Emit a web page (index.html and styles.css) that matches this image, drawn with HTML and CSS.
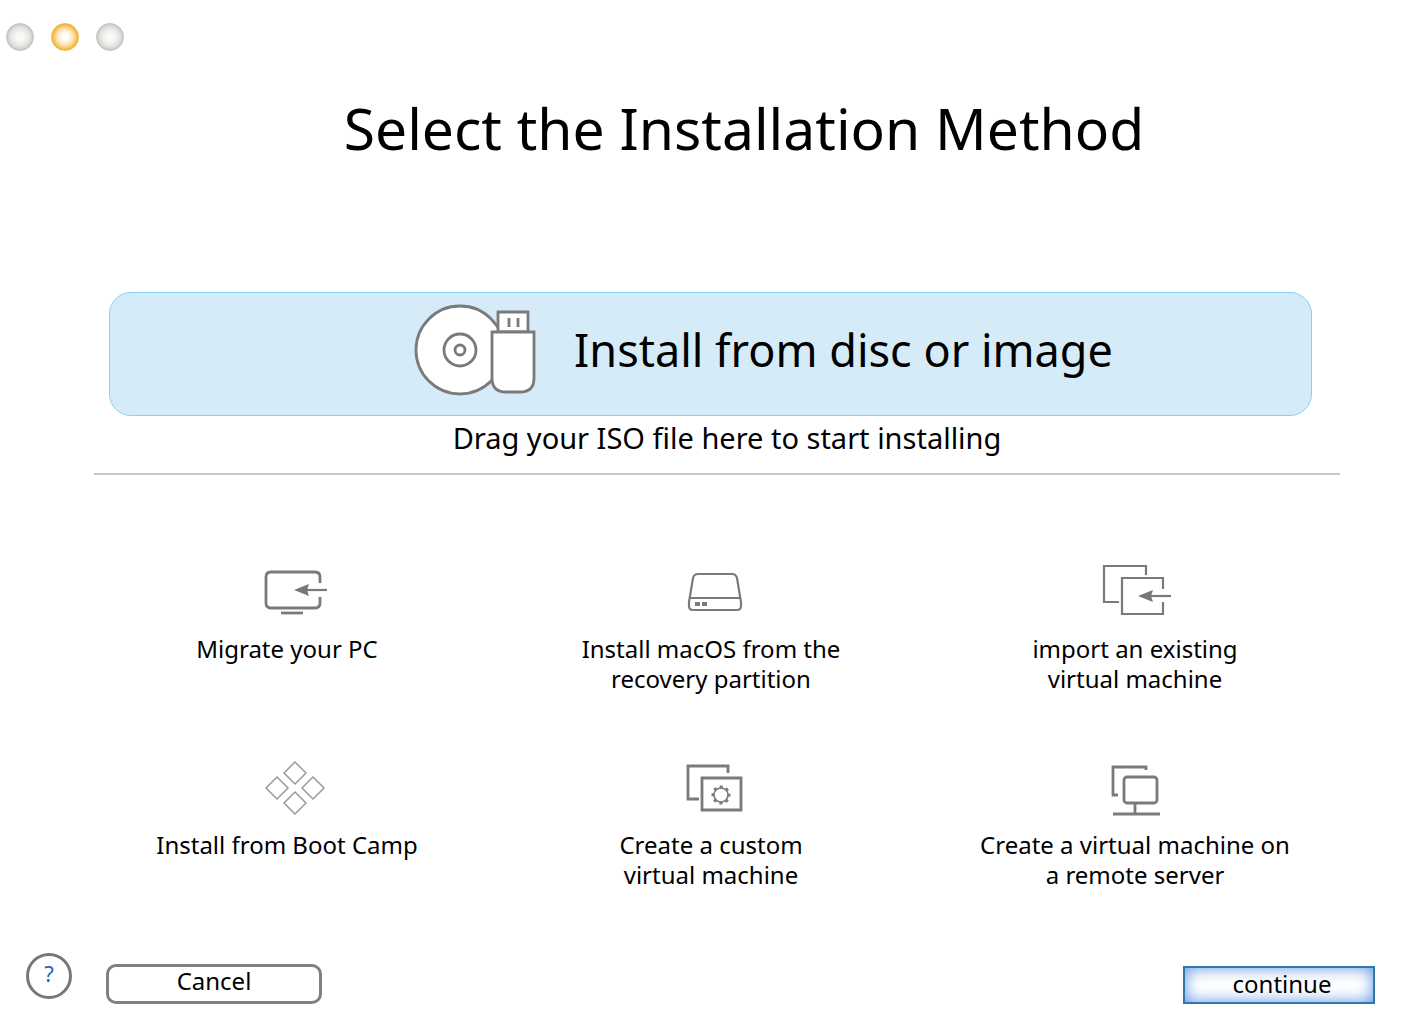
FILE: index.html
```html
<!DOCTYPE html>
<html lang="en">
<head>
    <meta charset="UTF-8">
    <meta name="viewport" content="width=device-width, initial-scale=1.0">
    <title>Select the Installation Method</title>
    <link rel="stylesheet" href="styles.css">
</head>
<body>
    <header class="titlebar">
        <button class="dot" aria-label="Close"></button>
        <button class="dot dot-active" aria-label="Minimize"></button>
        <button class="dot" aria-label="Zoom"></button>
    </header>

    <main>
        <h1>Select the Installation Method</h1>

        <section class="source">
            <button class="drop-area">
                <svg class="disc-icon" viewBox="0 0 124 92">
                    <circle cx="46" cy="46" r="44"/>
                    <circle cx="46" cy="46" r="16"/>
                    <circle cx="46" cy="46" r="5"/>
                    <path d="M84 8h30v20H84z"/>
                    <path d="M95 14v9M104 14v9"/>
                    <path d="M78 28h42v46q0 14-14 14H92q-14 0-14-14z"/>
                </svg>
                <span>Install from disc or image</span>
            </button>
            <p>Drag your ISO file here to start installing</p>
        </section>

        <section class="methods">
            <button class="method">
                <svg viewBox="0 0 80 60">
                    <path d="M70 21v-6q0-5-5-5H21q-5 0-5 5v26q0 5 5 5h44q5 0 5-5v-6"/>
                    <path d="M31 51h22"/>
                    <path class="thin" d="M77 28H54"/>
                    <path class="solid" d="M44 28l15-6-2 6 2 6z"/>
                </svg>
                <span>Migrate your PC</span>
            </button>

            <button class="method">
                <svg viewBox="0 0 80 60">
                    <path class="thin" d="M24 12h34q4 0 5 4l4 24v4q0 4-4 4H19q-4 0-4-4v-4l4-24q1-4 5-4zM16 36h50"/>
                    <path class="bar" d="M21 42h5M28 42h5"/>
                </svg>
                <span>Install macOS from the<br>recovery partition</span>
            </button>

            <button class="method">
                <svg viewBox="0 0 80 60">
                    <path class="thin" d="M48 13V4H6v36h15M65 27V16H24v36h41V40"/>
                    <path class="thin" d="M73 34H52"/>
                    <path class="solid" d="M40 34l15-6-2 6 2 6z"/>
                </svg>
                <span>import an existing<br>virtual machine</span>
            </button>

            <button class="method">
                <svg viewBox="0 0 80 60">
                    <path class="hair" d="M45 4l11 11-11 11-11-11zM27 19l11 11-11 11-11-11zM63 19l11 11-11 11-11-11zM45 34l11 11-11 11-11-11z"/>
                </svg>
                <span>Install from Boot Camp</span>
            </button>

            <button class="method">
                <svg viewBox="0 0 80 60">
                    <path d="M54 15V8H14v33h11M28 20h39v32H28z"/>
                    <circle class="ring" cx="47" cy="37" r="7"/>
                    <circle class="teeth" cx="47" cy="37" r="8"/>
                </svg>
                <span>Create a custom<br>virtual machine</span>
            </button>

            <button class="method">
                <svg viewBox="0 0 80 60">
                    <path d="M48 12V9H15v28h5"/>
                    <rect x="26" y="19" width="33" height="26" rx="3"/>
                    <path d="M37 45v11M15 56h47"/>
                </svg>
                <span>Create a virtual machine on<br>a remote server</span>
            </button>
        </section>
    </main>

    <footer>
        <button class="btn-help" aria-label="Help">?</button>
        <button class="btn-cancel">Cancel</button>
        <button class="btn-continue">continue</button>
    </footer>
</body>
</html>
```
FILE: styles.css
```css
* {
    margin: 0;
    padding: 0;
    box-sizing: border-box;
}

body {
    background: #fff;
    color: #000;
    font-family: 'Noto Sans', sans-serif;
}

button {
    font: inherit;
    color: inherit;
    background: none;
    border: none;
    cursor: pointer;
}

svg {
    fill: none;
    stroke: #7a7a7a;
    stroke-width: 2.8;
}

.titlebar {
    display: flex;
    gap: 17px;
    padding: 23px 6px;
}

.dot {
    width: 28px;
    height: 28px;
    border: 1px solid #c2c2c2;
    border-radius: 50%;
    background: radial-gradient(circle, #f8f8f4 20%, #e6e6e4 50%, #c8c8c8 72%);
}

.dot-active {
    border-color: #f0b84c;
    background: radial-gradient(circle, #fff 15%, #fde3b0 45%, #f3ae2c 72%);
}

h1 {
    padding: 18px 0 128px 71px;
    font-size: 57px;
    font-weight: 400;
    line-height: 72px;
    text-align: center;
}

.source {
    margin: 0 77px 0 94px;
    border-bottom: 2px solid #c8c8c8;
}

.drop-area {
    display: flex;
    align-items: center;
    justify-content: center;
    gap: 36px;
    width: calc(100% - 43px);
    height: 124px;
    margin-left: 15px;
    padding: 0 0 10px 106px;
    border: 1px solid #86d2f4;
    border-radius: 22px;
    background: #d5ecf8;
    font-size: 45px;
}

.disc-icon {
    width: 124px;
    height: 92px;
    fill: #fff;
    margin-top: 2px;
}

.source p {
    padding: 2px 0 15px 20px;
    font-size: 29px;
    line-height: 40px;
    text-align: center;
}

.methods {
    display: grid;
    grid-template-columns: repeat(3, 1fr);
    row-gap: 64px;
    padding: 87px 67px 0 78px;
}

.method {
    display: flex;
    flex-direction: column;
    align-items: center;
    gap: 12px;
    font-size: 24px;
    line-height: 30px;
}

.method svg {
    width: 80px;
    height: 60px;
}

.method span {
    padding-right: 6px;
}

.thin {
    stroke-width: 2.2;
}

.hair {
    stroke: #999;
    stroke-width: 1.5;
}

.ring {
    stroke-width: 1.6;
}

.bar {
    stroke-width: 4;
}

/* gear teeth: 8 dashes around the ring */
.teeth {
    stroke-width: 3;
    stroke-dasharray: 3 3.28;
    stroke-dashoffset: 1.5;
}

.solid {
    fill: #777;
    stroke: none;
}

footer {
    display: flex;
    align-items: flex-end;
    padding: 63px 42px 26px 26px;
    font-size: 24px;
}

.btn-help {
    width: 46px;
    height: 46px;
    margin: 0 34px 5px 0;
    padding-bottom: 6px;
    border: 3px solid #777;
    border-radius: 50%;
    color: #2f62b5;
    font-size: 22px;
    line-height: 32px;
}

.btn-cancel {
    width: 216px;
    height: 40px;
    padding-bottom: 6px;
    border: 3px solid #808080;
    border-radius: 10px;
    line-height: 28px;
}

.btn-continue {
    width: 192px;
    height: 38px;
    margin-left: auto;
    padding: 0 0 2px 6px;
    border: 2px solid #2f78ae;
    background: #fff;
    box-shadow: inset 0 0 16px #5c94e0;
    line-height: 30px;
}
```
